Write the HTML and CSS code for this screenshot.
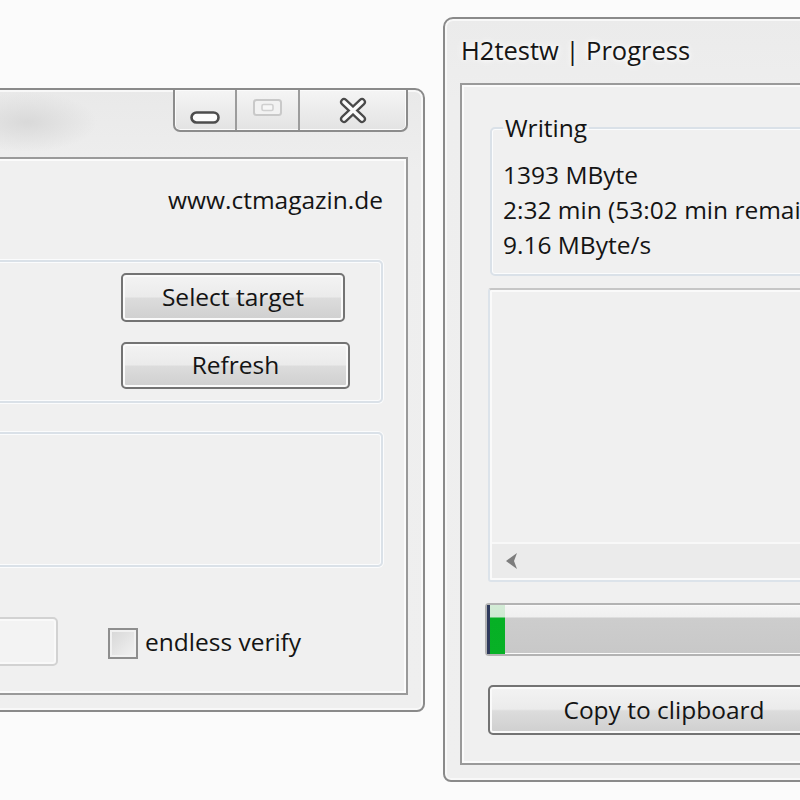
FILE: index.html
```html
<!DOCTYPE html>
<html lang="en">
<head>
<meta charset="utf-8">
<title>H2testw</title>
<link rel="stylesheet" href="styles.css">
</head>
<body>
<div class="desktop">
  <div class="win win-main">
    <div class="titlebar">
      <div class="caption">
        <div class="cbtn cbtn-min">
          <svg width="30" height="13" viewBox="0 0 30 13"><rect x="1.5" y="1.5" width="27" height="10" rx="5" fill="#fdfdfd" stroke="#4d4d4d" stroke-width="2.6"/></svg>
        </div>
        <div class="cbtn cbtn-max">
          <svg width="29" height="17" viewBox="0 0 29 17"><rect x="1" y="1" width="27" height="15" rx="2.5" fill="#f2f2f2" stroke="#c9c9c9" stroke-width="2"/><rect x="9" y="5.5" width="11" height="6" rx="1.5" fill="#f7f7f7" stroke="#d0d0d0" stroke-width="1.6"/></svg>
        </div>
        <div class="cbtn cbtn-close">
          <svg width="30" height="27" viewBox="0 0 30 27"><path d="M6 5 L24 22 M24 5 L6 22" stroke="#4a4a4a" stroke-width="8" stroke-linecap="round"/><path d="M6 5 L24 22 M24 5 L6 22" stroke="#fafafa" stroke-width="3.6" stroke-linecap="round"/></svg>
        </div>
      </div>
    </div>
    <div class="client client-main">
      <div class="url-row"><span class="url">www.ctmagazin.de</span></div>
      <div class="group group-target">
        <div class="btn-col">
          <button class="btn btn-select">Select target</button>
          <button class="btn btn-refresh">Refresh</button>
        </div>
      </div>
      <div class="group group-info"></div>
      <div class="bottom-row">
        <div class="textbox"></div>
        <label class="check"><span class="box"></span><span class="check-label">endless verify</span></label>
      </div>
    </div>
  </div>

  <div class="win win-progress">
    <div class="titlebar">
      <span class="title">H2testw | Progress</span>
    </div>
    <div class="client client-progress">
      <fieldset class="writing">
        <legend>Writing</legend>
        <div class="stat">1393 MByte</div>
        <div class="stat">2:32 min (53:02 min remaining)</div>
        <div class="stat">9.16 MByte/s</div>
      </fieldset>
      <div class="listbox">
        <div class="list-area"></div>
        <div class="hscroll">
          <svg width="14" height="16" viewBox="0 0 14 16"><polygon points="12,0 1,8 12,16 9,8" fill="#7d7d7d"/></svg>
        </div>
      </div>
      <div class="progress"><div class="progress-fill" style="width:18px"></div></div>
      <button class="btn btn-copy">Copy to clipboard</button>
    </div>
  </div>
</div>
</body>
</html>
```

FILE: styles.css
```css
* { box-sizing: border-box; }
html, body { margin: 0; padding: 0; }
body {
  background: #fbfbfb;
  overflow: hidden;
  font-family: "Open Sans", "Noto Sans", sans-serif;
  font-size: 24.5px;
  color: #141414;
}
.desktop { position: relative; width: 800px; height: 800px; overflow: hidden; }

.win {
  position: absolute;
  display: flex;
  flex-direction: column;
  border: 2px solid #8a8a8a;
  border-radius: 10px 10px 8px 8px;
  background: linear-gradient(#ebebeb, #eeeeee 80px, #efefef);
  box-shadow: inset 0 0 0 2px #f8f8f8;
  padding: 0 15px 15px;
}
.win-main {
  left: -200px; top: 88px; width: 625px; height: 624px;
  background:
    radial-gradient(ellipse 70px 30px at 225px 32px, #d9d9d9, rgba(235,235,235,0)),
    linear-gradient(#e9e9e9, #eeeeee 80px, #efefef);
}
.win-progress { left: 443px; top: 17px; width: 420px; height: 765px; }

.titlebar { flex: none; display: flex; }
.win-main .titlebar { height: 67px; justify-content: flex-end; align-items: flex-start; }
.win-progress .titlebar { height: 64px; align-items: center; padding-left: 1px; padding-bottom: 3px; }
.title { font-size: 25.5px; color: #161616; text-shadow: 0 0 8px #fff, 0 0 4px #fff; white-space: nowrap; }

.caption {
  display: flex;
  height: 42px;
  border: 2px solid #8c8c8c;
  border-top: none;
  border-radius: 0 0 7px 7px;
  background: linear-gradient(#f5f5f5, #ececec 50%, #e3e3e3);
  box-shadow: inset 0 0 0 1px #fbfbfb;
  overflow: hidden;
}
.cbtn { display: flex; justify-content: center; align-items: flex-start; }
.cbtn + .cbtn { border-left: 2px solid #9c9c9c; }
.cbtn svg { display: block; }
.cbtn-min { width: 60px; padding-top: 21px; }
.cbtn-max { width: 63px; padding-top: 9px; }
.cbtn-close { width: 108px; padding-top: 7px; }

.client {
  flex: 1;
  min-height: 0;
  background: #f0f0f0;
  border: 2px solid #9a9a9a;
  box-shadow: inset 0 0 0 2px #fbfbfb;
  display: flex;
  flex-direction: column;
  overflow: hidden;
}

/* main window */
.client-main { padding: 0 23px 0 24px; }
.url-row { margin-top: 26px; height: 30px; line-height: 30px; text-align: right; white-space: nowrap; }

.group {
  flex: none;
  border: 2px solid #dae1e8;
  border-radius: 5px;
  box-shadow: inset 0 0 0 1px #fbfcfd, 0 0 0 1px #fbfcfd;
}
.group-target { margin-top: 45px; height: 143px; display: flex; justify-content: flex-end; }
.btn-col { width: 260px; display: flex; flex-direction: column; align-items: flex-start; padding-top: 11px; gap: 20px; }
.group-info { margin-top: 29px; height: 135px; }

.btn {
  font: inherit;
  color: #141414;
  border: 2px solid #737373;
  border-radius: 5px;
  background: linear-gradient(#f3f3f3 0%, #ebebeb 48%, #dcdcdc 52%, #cfcfcf 100%);
  box-shadow: inset 0 0 0 2px #fafafa;
  padding: 0;
  line-height: 1;
  white-space: nowrap;
}
.btn-select { width: 224px; height: 49px; }
.btn-refresh { width: 229px; height: 47px; }
.btn-copy { align-self: flex-start; width: 352px; height: 50px; margin-top: 29px; }

.bottom-row { margin-top: 50px; display: flex; align-items: center; }
.textbox {
  width: 215px; height: 49px;
  border: 2px solid #d2d2d2;
  border-radius: 5px;
  background: #f3f3f3;
  box-shadow: inset 0 0 0 2px #f9f9f9;
}
.check { display: flex; align-items: center; margin-left: 50px; }
.check .box {
  width: 30px; height: 31px;
  border: 2px solid #8e8e8e;
  background: linear-gradient(135deg, #d6d6d6, #f3f3f3);
  box-shadow: inset 0 0 0 2px #f1f1f1;
  margin-right: 7px;
  margin-top: 4px;
}
.check-label { white-space: nowrap; }

/* progress window */
.client-progress { padding: 0 0 0 26px; }
.writing {
  flex: none;
  margin: 30px 0 0 2px;
  border: 2px solid #dae1e8;
  border-radius: 5px;
  padding: 16px 0 12px 11px;
  box-shadow: inset 0 0 0 1px #fbfcfd;
  white-space: nowrap;
  min-width: 0;
}
.writing legend { padding: 0 2px; line-height: 26px; }
.stat { line-height: 35px; }

.listbox {
  flex: none;
  margin-top: 12px;
  height: 294px;
  display: flex;
  flex-direction: column;
  border: 2px solid #dce3ea;
  border-top-color: #c6c6c6;
  border-radius: 3px;
  box-shadow: inset 0 0 0 2px #fafafa;
}
.list-area { flex: 1; }
.hscroll {
  height: 36px;
  margin: 0 2px 2px;
  background: #ebebeb;
  border-top: 2px solid #f8f8f8;
  display: flex;
  align-items: center;
  padding-left: 13px;
}
.hscroll svg { display: block; }

.progress {
  flex: none;
  margin: 21px 0 0 -3px;
  height: 53px;
  display: flex;
  border: 2px solid #b3b3b3;
  border-radius: 4px;
  background: linear-gradient(#f5f5f5 0, #f0f0f0 24%, #cdcdcd 27%, #c8c8c8 100%);
  box-shadow: inset 0 0 0 1px #fafafa;
}
.progress-fill {
  background: linear-gradient(#d3ecd6 0, #cfe9d2 24%, #06b025 27%, #07b126 100%);
  box-shadow: inset 3px 0 0 #2e3a5c;
}
```
